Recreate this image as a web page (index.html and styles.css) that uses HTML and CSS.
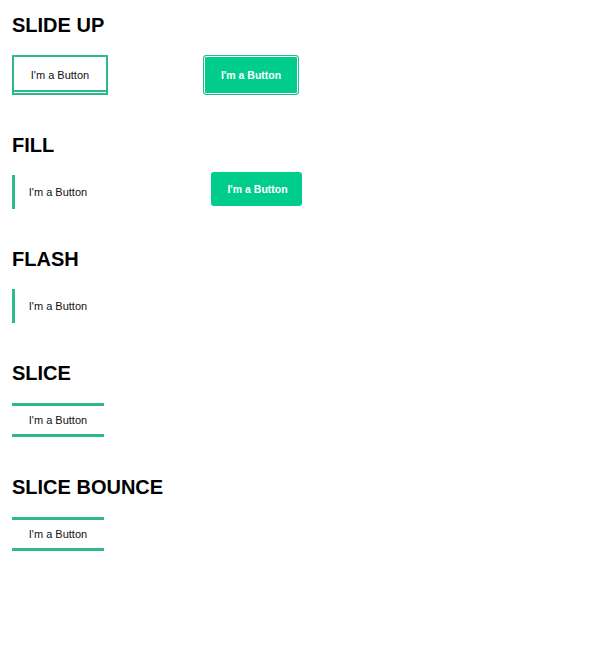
FILE: index.html
```html
<!DOCTYPE html>
<html>
<head>
<meta charset="utf-8">
<link rel="stylesheet" href="styles.css">
</head>
<body>
<main class="page">
  <section class="section">
    <h2 class="title">SLIDE UP</h2>
    <div class="row row-slide">
      <button class="btn slide">I'm a Button</button>
      <button class="btn slide-filled">I'm a Button</button>
    </div>
  </section>
  <section class="section">
    <h2 class="title">FILL</h2>
    <div class="row row-fill">
      <button class="btn fill">I'm a Button</button>
      <button class="btn fill-filled">I'm a Button</button>
    </div>
  </section>
  <section class="section">
    <h2 class="title">FLASH</h2>
    <div class="row">
      <button class="btn fill">I'm a Button</button>
    </div>
  </section>
  <section class="section">
    <h2 class="title">SLICE</h2>
    <div class="row">
      <button class="btn slice">I'm a Button</button>
    </div>
  </section>
  <section class="section">
    <h2 class="title">SLICE BOUNCE</h2>
    <div class="row">
      <button class="btn slice">I'm a Button</button>
    </div>
  </section>
</main>
</body>
</html>
```
FILE: styles.css
```css
html, body {
  margin: 0;
  padding: 0;
  background: #fff;
}
body {
  font-family: "Liberation Sans", Arial, sans-serif;
  color: #000;
}
.page {
  padding: 14px 0 0 12px;
}
.section {
  margin-bottom: 39px;
}
.title {
  margin: 0 0 18px;
  font-size: 20px;
  line-height: 23px;
  font-weight: 700;
}
.row {
  display: flex;
  align-items: flex-start;
}
.btn {
  font-family: "Liberation Sans", Arial, sans-serif;
  font-size: 11px;
  color: #111;
  background: transparent;
  border: 0;
  padding: 0;
  margin: 0;
  display: flex;
  align-items: center;
  justify-content: center;
  box-sizing: border-box;
}
.row-slide {
  gap: 95px;
}
.slide {
  position: relative;
  width: 96px;
  height: 40px;
  border: 2px solid #2fb78f;
  background: #fff;
}
.slide::after {
  content: "";
  position: absolute;
  left: 0;
  right: 0;
  bottom: 1px;
  height: 2px;
  background: #2fb78f;
}
.slide-filled {
  width: 96px;
  height: 40px;
  border: 1px solid #2fb78f;
  border-radius: 3px;
  background: #00cc8c;
  box-shadow: inset 0 0 0 1px #ffffff;
  color: #fff;
  font-weight: 700;
  font-size: 10.5px;
}
.row-fill {
  gap: 107px;
}
.fill {
  width: 92px;
  height: 34px;
  padding-right: 3px;
  border-left: 3px solid #2fb78f;
}
.fill-filled {
  width: 91px;
  height: 34px;
  margin-top: -3px;
  padding-left: 2px;
  border-radius: 3px;
  background: #00cc8c;
  color: #fff;
  font-weight: 700;
  font-size: 10.5px;
}
.slice {
  width: 92px;
  height: 34px;
  border-top: 3px solid #2fb78f;
  border-bottom: 3px solid #2fb78f;
}
```
